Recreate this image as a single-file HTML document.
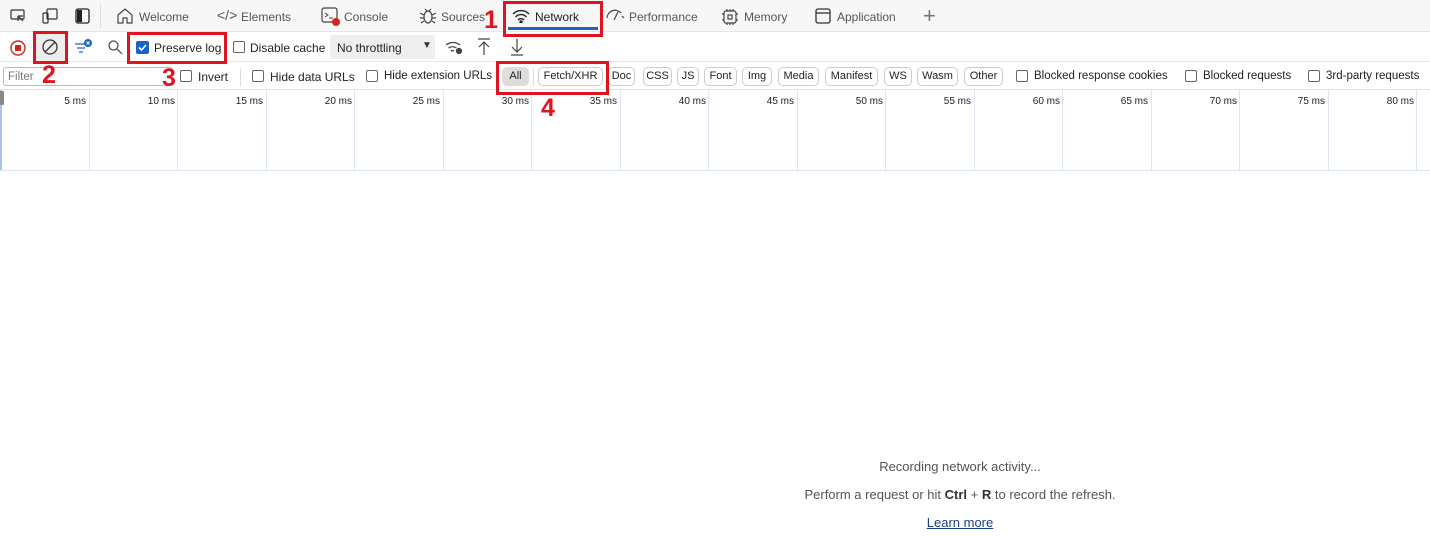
<!DOCTYPE html>
<html><head><meta charset="utf-8"><style>
*{box-sizing:border-box;margin:0;padding:0}
body{width:1430px;height:536px;background:#fff;font-family:"Liberation Sans",sans-serif;font-size:12px;color:#333;position:relative;overflow:hidden}
.a{position:absolute;white-space:nowrap}
.tab{font-size:12px;color:#555;top:10px}
.red{position:absolute;border:3px solid #e0141e}
.num{position:absolute;color:#e0141e;font-weight:bold;font-size:25px;font-family:"Liberation Sans",sans-serif}
.cb{position:absolute;width:12px;height:12px;border:1px solid #666;border-radius:2px;background:#fff}
.chip{position:absolute;top:67px;height:19px;border:1px solid #ccc;border-radius:5px;font-size:11px;line-height:17px;text-align:center;color:#222;background:#fff}
.vl{position:absolute;top:90px;height:80px;width:1px;background:#dde6f3}
.tl{position:absolute;top:96px;font-size:10px;color:#222;text-align:right;width:60px}
svg{position:absolute}
</style></head><body>
<div class="a" style="left:0;top:0;width:1430px;height:32px;background:#f7f7f7;border-bottom:1px solid #e6e6e6"></div>
<svg style="left:10px;top:8px" width="16" height="16" viewBox="0 0 16 16" fill="none" stroke="#333" stroke-width="1.2"><rect x="1" y="2" width="13" height="9" rx="1"/><path d="M8 8l5 5M8 8v5M8 8h5"/></svg>
<svg style="left:42px;top:8px" width="16" height="16" viewBox="0 0 16 16" fill="none" stroke="#333" stroke-width="1.2"><rect x="5" y="1" width="10" height="10" rx="1"/><rect x="1" y="5" width="5" height="10" rx="1"/></svg>
<svg style="left:75px;top:8px" width="16" height="16" viewBox="0 0 16 16"><rect x="1" y="1" width="13" height="14" rx="2" fill="none" stroke="#222" stroke-width="1.3"/><rect x="2" y="2" width="5" height="12" fill="#222"/></svg>
<div class="a" style="left:100px;top:4px;width:1px;height:24px;background:#ddd"></div>
<svg style="left:116px;top:7px" width="18" height="18" viewBox="0 0 18 18" fill="none" stroke="#444" stroke-width="1.2"><path d="M2 8L9 2l7 6v8h-5v-5H7v5H2z"/></svg>
<div class="a tab" style="left:139px">Welcome</div>
<div class="a tab" style="left:217px;font-size:14px;top:7px">&lt;/&gt;</div>
<div class="a tab" style="left:241px">Elements</div>
<svg style="left:321px;top:7px" width="20" height="20" viewBox="0 0 20 20"><rect x="1" y="1" width="15" height="14" rx="2" fill="none" stroke="#444" stroke-width="1.2"/><path d="M4 6l3 2-3 2M8 11h4" stroke="#444" fill="none"/><circle cx="15" cy="15" r="4" fill="#d0271d"/></svg>
<div class="a tab" style="left:344px">Console</div>
<svg style="left:419px;top:7px" width="18" height="18" viewBox="0 0 18 18" fill="none" stroke="#444" stroke-width="1.2"><ellipse cx="9" cy="10" rx="4" ry="6"/><path d="M1 6l4 2M17 6l-4 2M1 11h4M17 11h-4M2 16l3-2M16 16l-3-2M6 2l2 2M12 2l-2 2"/></svg>
<div class="a tab" style="left:441px">Sources</div>
<svg style="left:512px;top:9px" width="18" height="14" viewBox="0 0 18 14" fill="none" stroke="#222" stroke-width="1.4"><path d="M1 5a11 11 0 0 1 16 0M3.5 8a7.5 7.5 0 0 1 11 0M6 11a4 4 0 0 1 6 0"/><circle cx="9" cy="13" r="1" fill="#222"/></svg>
<div class="a tab" style="left:535px;color:#222">Network</div>
<div class="a" style="left:508px;top:27px;width:90px;height:3px;background:#1a64c8"></div>
<svg style="left:605px;top:8px" width="20" height="16" viewBox="0 0 20 16" fill="none" stroke="#444" stroke-width="1.2"><path d="M2 10a8 8 0 0 1 14-5M9 12l4-8M17 8l2 2"/></svg>
<div class="a tab" style="left:629px">Performance</div>
<svg style="left:721px;top:8px" width="18" height="18" viewBox="0 0 18 18" fill="none" stroke="#444" stroke-width="1.2"><rect x="3" y="3" width="12" height="12" rx="2"/><path d="M6 1v2M9 1v2M12 1v2M6 15v2M9 15v2M12 15v2M1 6h2M1 12h2M15 6h2M15 12h2"/><rect x="7" y="7" width="4" height="4"/></svg>
<div class="a tab" style="left:744px">Memory</div>
<svg style="left:815px;top:8px" width="16" height="16" viewBox="0 0 16 16" fill="none" stroke="#333" stroke-width="1.3"><rect x="1" y="1" width="14" height="14" rx="2"/><path d="M1 5h14"/></svg>
<div class="a tab" style="left:837px">Application</div>
<div class="a" style="left:923px;top:3px;font-size:22px;color:#777;font-weight:lighter">+</div>

<div class="a" style="left:0;top:32px;width:1430px;height:30px;background:#fff;border-bottom:1px solid #e6e6e6"></div>
<svg style="left:9px;top:39px" width="18" height="18" viewBox="0 0 18 18"><circle cx="9" cy="9" r="7" fill="none" stroke="#d0271d" stroke-width="1.4"/><rect x="6" y="6" width="6" height="6" rx="1" fill="#d0271d"/></svg>
<div class="a" style="left:36px;top:34px;width:30px;height:28px;background:#eee"></div>
<svg style="left:41px;top:38px" width="18" height="18" viewBox="0 0 18 18" fill="none" stroke="#333" stroke-width="1.3"><circle cx="9" cy="9" r="7"/><path d="M4 14L14 4"/></svg>
<svg style="left:73px;top:38px" width="20" height="18" viewBox="0 0 20 18" fill="none" stroke="#1a64c8" stroke-width="1.3"><path d="M2 6h10M4 10h8M6 14h4"/><circle cx="15" cy="5" r="4" fill="#1a64c8" stroke="none"/><path d="M13.5 3.5l3 3M16.5 3.5l-3 3" stroke="#fff" stroke-width="1"/></svg>
<svg style="left:107px;top:39px" width="16" height="16" viewBox="0 0 16 16" fill="none" stroke="#444" stroke-width="1.2"><circle cx="6.5" cy="6.5" r="4.5"/><path d="M10 10l5 5"/></svg>
<div class="a" style="left:136px;top:41px;width:13px;height:13px;background:#1a64c8;border-radius:2px"></div>
<svg style="left:136px;top:41px" width="13" height="13" viewBox="0 0 13 13"><path d="M3 6.5l2.5 2.5L10 4" fill="none" stroke="#fff" stroke-width="1.6"/></svg>
<div class="a" style="left:154px;top:41px;font-size:12px;color:#222">Preserve log</div>
<div class="cb" style="left:233px;top:41px"></div>
<div class="a" style="left:250px;top:41px;color:#222">Disable cache</div>
<div class="a" style="left:330px;top:35px;width:105px;height:24px;background:#efefef"></div>
<div class="a" style="left:337px;top:41px;color:#222">No throttling</div>
<div class="a" style="left:422px;top:40px;font-size:10px;color:#333">▼</div>
<svg style="left:445px;top:39px" width="18" height="16" viewBox="0 0 18 16" fill="none" stroke="#444" stroke-width="1.3"><path d="M1 6a11 11 0 0 1 14 0M3.5 9a7 7 0 0 1 8 0M6 12a3 3 0 0 1 3 0"/><circle cx="14" cy="12" r="2.5" fill="#444"/></svg>
<svg style="left:477px;top:38px" width="14" height="18" viewBox="0 0 14 18" fill="none" stroke="#444" stroke-width="1.2"><path d="M1 1h12M7 4v13M2 9l5-5 5 5"/></svg>
<svg style="left:510px;top:38px" width="14" height="18" viewBox="0 0 14 18" fill="none" stroke="#444" stroke-width="1.2"><path d="M1 17h12M7 1v13M2 9l5 5 5-5"/></svg>

<div class="a" style="left:0;top:62px;width:1430px;height:28px;background:#fff;border-bottom:1px solid #dde6f3"></div>
<div class="a" style="left:3px;top:67px;width:170px;height:19px;border:1px solid #bbb;border-radius:3px"></div>
<div class="a" style="left:8px;top:71px;color:#777;font-size:11.5px">Filter</div>
<div class="cb" style="left:180px;top:70px"></div>
<div class="a" style="left:198px;top:70px;color:#222">Invert</div>
<div class="a" style="left:240px;top:68px;width:1px;height:18px;background:#ddd"></div>
<div class="cb" style="left:252px;top:70px"></div>
<div class="a" style="left:270px;top:70px;color:#222">Hide data URLs</div>
<div class="cb" style="left:366px;top:70px"></div>
<div class="a" style="left:384px;top:70px;color:#222;font-size:11.5px">Hide extension URLs</div>
<div class="chip" style="left:502px;width:27px;background:#ddd;border-color:#ddd">All</div>
<div class="a" style="left:533px;top:68px;width:1px;height:18px;background:#ddd"></div>
<div class="chip" style="left:538px;width:65px">Fetch/XHR</div>
<div class="chip" style="left:608px;width:27px">Doc</div>
<div class="chip" style="left:643px;width:29px">CSS</div>
<div class="chip" style="left:677px;width:22px">JS</div>
<div class="chip" style="left:704px;width:33px">Font</div>
<div class="chip" style="left:742px;width:30px">Img</div>
<div class="chip" style="left:778px;width:41px">Media</div>
<div class="chip" style="left:825px;width:53px">Manifest</div>
<div class="chip" style="left:884px;width:28px">WS</div>
<div class="chip" style="left:917px;width:41px">Wasm</div>
<div class="chip" style="left:964px;width:39px">Other</div>
<div class="cb" style="left:1016px;top:70px"></div>
<div class="a" style="left:1034px;top:70px;color:#222;font-size:11.5px">Blocked response cookies</div>
<div class="cb" style="left:1185px;top:70px"></div>
<div class="a" style="left:1203px;top:70px;color:#222;font-size:11.5px">Blocked requests</div>
<div class="cb" style="left:1308px;top:70px"></div>
<div class="a" style="left:1326px;top:70px;color:#222;font-size:11.5px">3rd-party requests</div>

<div class="a" style="left:0;top:90px;width:2px;height:80px;background:#a8c4ee"></div>
<div class="a" style="left:0;top:91px;width:4px;height:14px;background:#888;border-radius:1px"></div>
<div class="a" style="left:0;top:170px;width:1430px;height:1px;background:#dde6f3"></div>
<div class="vl" style="left:89px"></div><div class="tl" style="left:26px">5 ms</div>
<div class="vl" style="left:177px"></div><div class="tl" style="left:115px">10 ms</div>
<div class="vl" style="left:266px"></div><div class="tl" style="left:203px">15 ms</div>
<div class="vl" style="left:354px"></div><div class="tl" style="left:292px">20 ms</div>
<div class="vl" style="left:443px"></div><div class="tl" style="left:380px">25 ms</div>
<div class="vl" style="left:531px"></div><div class="tl" style="left:469px">30 ms</div>
<div class="vl" style="left:620px"></div><div class="tl" style="left:557px">35 ms</div>
<div class="vl" style="left:708px"></div><div class="tl" style="left:646px">40 ms</div>
<div class="vl" style="left:797px"></div><div class="tl" style="left:734px">45 ms</div>
<div class="vl" style="left:885px"></div><div class="tl" style="left:823px">50 ms</div>
<div class="vl" style="left:974px"></div><div class="tl" style="left:911px">55 ms</div>
<div class="vl" style="left:1062px"></div><div class="tl" style="left:1000px">60 ms</div>
<div class="vl" style="left:1151px"></div><div class="tl" style="left:1088px">65 ms</div>
<div class="vl" style="left:1239px"></div><div class="tl" style="left:1177px">70 ms</div>
<div class="vl" style="left:1328px"></div><div class="tl" style="left:1265px">75 ms</div>
<div class="vl" style="left:1416px"></div><div class="tl" style="left:1354px">80 ms</div>

<div class="a" style="left:760px;top:459px;width:400px;text-align:center;font-size:13px;color:#555">Recording network activity...</div>
<div class="a" style="left:760px;top:487px;width:400px;text-align:center;font-size:13px;color:#555">Perform a request or hit <b style="color:#333">Ctrl</b> + <b style="color:#333">R</b> to record the refresh.</div>
<div class="a" style="left:760px;top:515px;width:400px;text-align:center;font-size:13px;color:#1a3e8c;text-decoration:underline">Learn more</div>

<div class="red" style="left:503px;top:1px;width:100px;height:36px"></div>
<div class="num" style="left:484px;top:6px">1</div>
<div class="red" style="left:33px;top:31px;width:35px;height:33px"></div>
<div class="num" style="left:42px;top:61px">2</div>
<div class="red" style="left:127px;top:32px;width:100px;height:32px"></div>
<div class="num" style="left:162px;top:64px">3</div>
<div class="red" style="left:496px;top:61px;width:113px;height:34px"></div>
<div class="num" style="left:541px;top:94px">4</div>
</body></html>
